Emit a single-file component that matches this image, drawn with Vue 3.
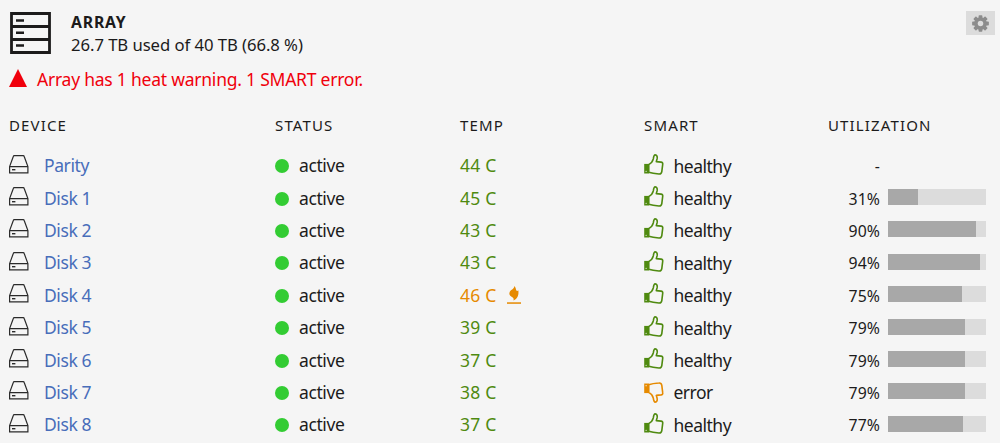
<template>
  <div class="array-panel">
    <header class="panel-header">
      <svg class="array-icon" viewBox="0 0 42 42">
        <path d="M1.5 1.5h38v39h-38zM1.5 14.5h38M1.5 27.5h38" fill="none" stroke="#1c1b1b" stroke-width="2.8" />
        <path d="M6 8.5h8M6 20.8h8M6 33.5h8" stroke="#1c1b1b" stroke-width="2.4" />
      </svg>
      <div class="summary">
        <h2>ARRAY</h2>
        <p>26.7 TB used of 40 TB (66.8 %)</p>
      </div>
      <button class="settings">
        <svg viewBox="-10 -10 20 20">
          <g fill="#8c8c8c">
            <rect v-for="n in 4" :key="n" x="-2" y="-8.8" width="4" height="17.6" rx="0.8" :transform="`rotate(${n * 45})`" />
          </g>
          <circle r="4.8" fill="none" stroke="#8c8c8c" stroke-width="3.8" />
          <circle r="2.9" fill="#dcdcdc" />
        </svg>
      </button>
    </header>

    <div class="warning">
      <svg viewBox="0 0 18 18"><path d="M9 0l9 18H0z" fill="#f0000c" /></svg>
      <span>Array has 1 heat warning. 1 SMART error.</span>
    </div>

    <div class="row head">
      <span v-for="title in columns" :key="title">{{ title }}</span>
    </div>

    <div v-for="disk in disks" :key="disk.name" class="row">
      <div class="device">
        <svg viewBox="0 0 20 19" fill="none" stroke="#2b2b2b">
          <path d="M.6 11.6L4.3 1.5Q4.5.7 5.3.7h8.9q.8 0 1 .8l3.7 10.1v6.2H.6zM.6 11.6h18.3" stroke-width="1.2" />
          <path d="M3 14.7h3.4" stroke-width="1.4" />
        </svg>
        <a href="#">{{ disk.name }}</a>
      </div>
      <div class="status"><i class="dot"></i><span>active</span></div>
      <div class="temp" :class="{ hot: disk.hot }">
        <span>{{ disk.temp }} C</span>
        <svg v-if="disk.hot" viewBox="0 0 14 18">
          <path d="M7.2 0C9.200 1.600 8.600 3.800 9.600 4.800 10.300 5.200 10.900 4.600 11.300 4.200 12 8.400 11 12.600 6.400 14.600 7.200 12.700 6.200 11.700 4.600 10.800 2.400 9.500 1.800 7.700 2.800 5.700 3.900 3.600 7.600 2.900 7.200 0z" />
          <path d="M0 16.300h14v1.500H0z" />
        </svg>
      </div>
      <div class="smart" :class="{ failed: disk.error }">
        <svg viewBox="0 0 20 21">
          <path d="M.2 9.900h4.900v9.600H.2z" fill="currentColor" />
          <circle cx="2.100" cy="17.300" r=".6" fill="#f5f5f5" />
          <path
            d="M4.700 10.600C6.500 9.700 8.700 7.500 9.300 4.900 9.600 2.500 9.900.9 11.200.9c1.800 0 2.300 1.900 1.900 3.800l-.8 2.900 4.700.5c1.400.2 1.900 1 1.700 2.200l-.9 7.300c-.3 1.900-1.200 2.600-2.900 2.400-3.200-.2-6.600-.5-10.200-1.700z"
            fill="none"
            stroke="currentColor"
            stroke-width="1.600"
            stroke-linejoin="round"
          />
        </svg>
        <span>{{ disk.error ? 'error' : 'healthy' }}</span>
      </div>
      <div class="usage">
        <span>{{ disk.used ? disk.used + '%' : '-' }}</span>
        <div v-if="disk.used" class="bar">
          <div class="fill" :style="{ width: disk.used + '%' }"></div>
        </div>
      </div>
    </div>
  </div>
</template>

<script setup>
const columns = ['DEVICE', 'STATUS', 'TEMP', 'SMART', 'UTILIZATION']

const disks = [
  { name: 'Parity', temp: 44, used: null },
  { name: 'Disk 1', temp: 45, used: 31 },
  { name: 'Disk 2', temp: 43, used: 90 },
  { name: 'Disk 3', temp: 43, used: 94 },
  { name: 'Disk 4', temp: 46, used: 75, hot: true },
  { name: 'Disk 5', temp: 39, used: 79 },
  { name: 'Disk 6', temp: 37, used: 79 },
  { name: 'Disk 7', temp: 38, used: 79, error: true },
  { name: 'Disk 8', temp: 37, used: 77 }
]
</script>

<style>
body {
  margin: 0;
  background: #f5f5f5;
}
</style>

<style scoped>
.array-panel {
  box-sizing: border-box;
  height: 443px;
  overflow: hidden;
  padding: 11px 5px 0 9px;
  background: #f5f5f5;
  color: #1c1b1b;
  font-family: "Noto Sans", sans-serif;
  font-size: 17.5px;
  letter-spacing: -0.4px;
}

svg {
  display: block;
  flex: none;
}

.panel-header {
  display: flex;
  height: 46px;
}

.array-icon {
  width: 42px;
  height: 42px;
  margin: 1px 19px 0 1px;
}

.summary {
  flex: 1;
  white-space: nowrap;
}

h2 {
  margin: 0;
  font-size: 15.8px;
  line-height: 22px;
  letter-spacing: 0.8px;
}

p {
  margin: 0;
  font-size: 16.7px;
  line-height: 23px;
  letter-spacing: -0.06px;
}

.settings {
  display: flex;
  align-items: center;
  justify-content: center;
  width: 29px;
  height: 24px;
  padding: 0;
  border: none;
  background: #dcdcdc;
}

.settings svg {
  width: 19px;
  height: 19px;
}

.warning {
  display: flex;
  align-items: center;
  height: 43px;
  color: #f0000c;
  letter-spacing: -0.23px;
}

.warning svg {
  width: 18px;
  height: 18px;
  margin: 0 10px 2px 0;
}

.row {
  display: grid;
  grid-template-columns: 266px 185px 184px 184px 158px;
  align-items: center;
  height: 32.4px;
  white-space: nowrap;
}

.row > div {
  display: flex;
  align-items: center;
}

.head {
  height: 49px;
  font-size: 15px;
  letter-spacing: 1.15px;
}

.device svg {
  width: 20px;
  height: 19px;
  margin: 0 15px 2px 0;
}

.device a {
  color: #486dba;
  text-decoration: none;
}

.dot {
  width: 14px;
  height: 14px;
  margin: 2px 10px 0 0;
  border-radius: 50%;
  background: #33cc33;
}

.temp {
  color: #4f8a10;
  letter-spacing: 0.25px;
}

.temp.hot {
  color: #e68a00;
}

.temp svg {
  width: 14px;
  height: 18px;
  margin-left: 10px;
  fill: #e68a00;
}

.smart svg {
  width: 20px;
  height: 21px;
  margin: 0 9.5px 2px 0;
  color: #4f8a10;
}

.smart span {
  padding-top: 1px;
  letter-spacing: -0.5px;
}

.smart.failed svg {
  margin: 1px 9.5px 0 0;
  color: #e68a00;
  transform: scaleY(-1);
}

.usage span {
  width: 52px;
  margin-right: 8px;
  padding-top: 2px;
  text-align: right;
  font-size: 15.8px;
  letter-spacing: 0.1px;
}

.bar {
  width: 98px;
  height: 16px;
  margin-bottom: 1px;
  background: #dcdcdc;
}

.fill {
  height: 100%;
  background: #a8a8a8;
}
</style>
